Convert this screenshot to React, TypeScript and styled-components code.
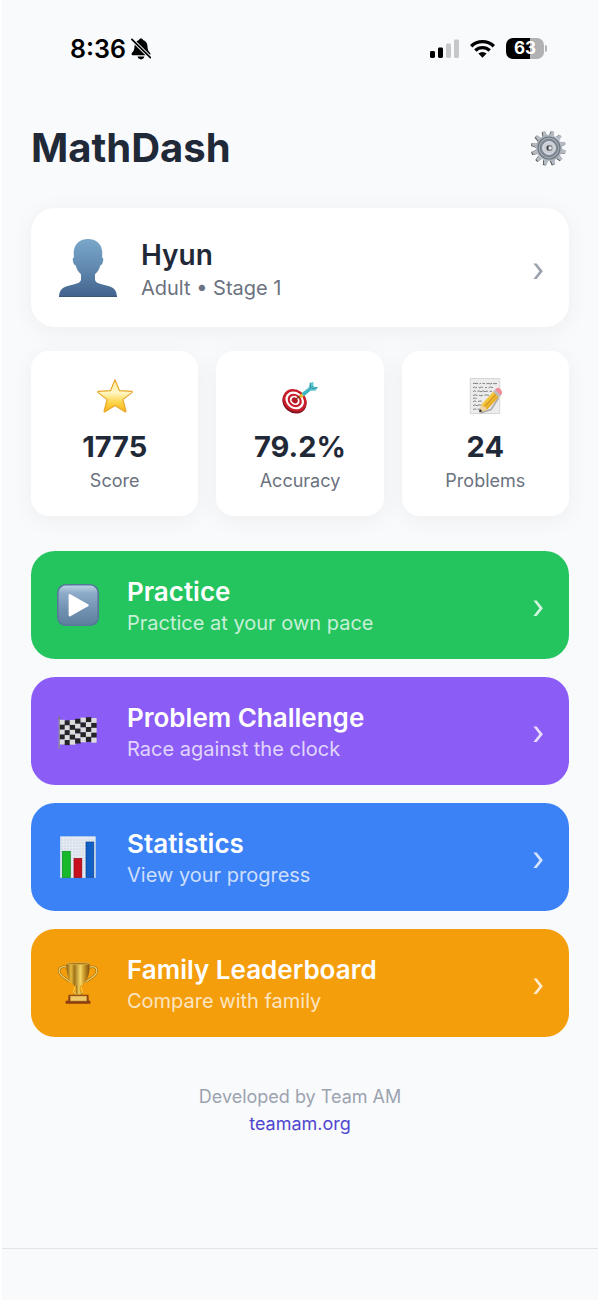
import { createGlobalStyle, styled } from "styled-components";

const GEAR_TEETH = Array.from({ length: 12 }, (_, i) => i * 30 + 13);

const App = () => {
  return (
    <Page>
      <GlobalStyle />
      <StatusBar>
        <StatusGroup $gap={5}>
          <Time>8:36</Time>
          <BellOffIcon />
        </StatusGroup>
        <StatusGroup $gap={11}>
          <SignalIcon />
          <WifiIcon />
          <Battery>63</Battery>
        </StatusGroup>
      </StatusBar>

      <Content>
        <Header>
          <Title>MathDash</Title>
          <IconButton aria-label="Settings">
            <GearIcon />
          </IconButton>
        </Header>

        <ProfileCard>
          <PersonIcon />
          <CardText>
            <ProfileName>Hyun</ProfileName>
            <ProfileInfo>Adult • Stage 1</ProfileInfo>
          </CardText>
          <Chevron color="#9ca3af" />
        </ProfileCard>

        <Stats>
          {stats.map(({ icon, value, label }) => (
            <StatCard key={label}>
              {icon}
              <StatValue>{value}</StatValue>
              <StatLabel>{label}</StatLabel>
            </StatCard>
          ))}
        </Stats>

        <Menu>
          {menus.map(({ icon, title, description, color }) => (
            <MenuButton key={title} $color={color}>
              {icon}
              <CardText>
                <MenuTitle>{title}</MenuTitle>
                <MenuDescription>{description}</MenuDescription>
              </CardText>
              <Chevron color="rgba(255, 255, 255, 0.8)" />
            </MenuButton>
          ))}
        </Menu>

        <Footer>
          <span>Developed by Team AM</span>
          <FooterLink href="#">teamam.org</FooterLink>
        </Footer>
      </Content>

      <BottomBar />
    </Page>
  );
};

const Chevron = ({ color }: { color: string }) => (
  <svg width="10" height="21" viewBox="0 0 10 21" fill={color}>
    <path d="M0.4 5.6H3.7L9.9 13.3L3.7 21H0.4L6.4 13.3Z" />
  </svg>
);

const BellOffIcon = () => (
  <svg width="20" height="22" viewBox="0 0 20 22">
    <path
      d="M10 0.4C8.8 0.4 8.1 1.1 8 2.1C5 3 3.6 5.6 3.5 8.6C3.4 12.2 2.4 13.4 1 14.8C0.2 15.7 0.5 17.2 1.8 17.2H18.2C19.5 17.2 19.8 15.7 19 14.8C17.6 13.4 16.6 12.2 16.5 8.6C16.4 5.6 15 3 12 2.1C11.9 1.1 11.2 0.4 10 0.4Z"
      fill="#000"
    />
    <path d="M6.6 18.6H13.4C13 20.4 11.8 21.4 10 21.4S7 20.4 6.6 18.6Z" fill="#000" />
    <path d="M0 0.6L20 20.2" stroke="#f9fafc" strokeWidth="3.6" />
    <path d="M0.9 1.3L19.4 19.6" stroke="#000" strokeWidth="1.7" strokeLinecap="round" />
  </svg>
);

const SignalIcon = () => (
  <svg width="29" height="20" viewBox="0 0 29 20">
    <rect x="0" y="12" width="5" height="7" rx="1.4" fill="#000" />
    <rect x="8" y="8.6" width="5" height="10.4" rx="1.4" fill="#000" />
    <rect x="16" y="4.4" width="5" height="14.6" rx="1.4" fill="#c6c7c8" />
    <rect x="24" y="0.4" width="5" height="18.6" rx="1.4" fill="#c6c7c8" />
  </svg>
);

const WifiIcon = () => (
  <svg width="25" height="20" viewBox="0 0 25 20">
    <g fill="none" stroke="#000" strokeWidth="3.4">
      <path d="M1.2 7.2A16.2 16.2 0 0 1 23.8 7.2" />
      <path d="M5.3 11.5A10.4 10.4 0 0 1 19.7 11.5" />
    </g>
    <path d="M8.4 14.6A6 6 0 0 1 16.6 14.6L12.5 18.7Z" fill="#000" />
  </svg>
);

const GearIcon = () => (
  <svg width="36" height="36" viewBox="0 0 36 36">
    <defs>
      <linearGradient id="gearFace" x1="0" y1="0" x2="1" y2="1">
        <stop offset="0" stopColor="#9aa1a8" />
        <stop offset="0.5" stopColor="#c3c8ce" />
        <stop offset="1" stopColor="#9ea5ae" />
      </linearGradient>
    </defs>
    <g fill="#55534f" transform="translate(-0.8 0.4)">
      {GEAR_TEETH.map((angle) => (
        <path key={angle} d="M15.8 6L16.5 0.7H19.5L20.2 6Z" transform={`rotate(${angle} 18 18)`} />
      ))}
    </g>
    <g fill="#b4bac1">
      {GEAR_TEETH.map((angle) => (
        <path key={angle} d="M15.8 6L16.6 0.8H19.4L20.2 6Z" transform={`rotate(${angle} 18 18)`} />
      ))}
    </g>
    <circle cx="18" cy="18" r="13.2" fill="url(#gearFace)" />
    <circle cx="18" cy="18" r="11" fill="#a3abb3" stroke="#6d767f" strokeWidth="1.2" />
    <circle cx="18" cy="18" r="8.6" fill="#858e98" stroke="#747d86" strokeWidth="1" />
    <circle cx="18" cy="18" r="6.4" fill="#c9ced4" stroke="#eceff2" strokeWidth="0.8" />
    <circle cx="18.4" cy="18" r="3.1" fill="#7a8087" />
    <path d="M17 15.4A3 3 0 0 0 17.4 20.6Z" fill="#3b3a38" />
    <circle cx="19.2" cy="18" r="1.5" fill="#f1f3f5" />
  </svg>
);

const PersonIcon = () => (
  <svg width="58" height="58" viewBox="0 0 58 58">
    <defs>
      <linearGradient id="person" x1="0" y1="0" x2="0" y2="1">
        <stop offset="0" stopColor="#7aa7cb" />
        <stop offset="0.5" stopColor="#6289b0" />
        <stop offset="1" stopColor="#41628c" />
      </linearGradient>
    </defs>
    <path
      d="M29 0C20 0 14.6 6 14.7 14.5L14.9 18.6C13.4 18.8 13.6 21 14.2 23.2C14.7 25.2 15.6 26.2 16.6 26.2C17.6 30.2 19.5 33 22 35.2V41C21 44 17 45 11.5 46.2C3.5 47.8 0.3 50.5 0 58H58C57.7 50.5 54.5 47.8 46.5 46.2C41 45 37 44 36 41V35.2C38.5 33 40.4 30.2 41.4 26.2C42.4 26.2 43.3 25.2 43.8 23.2C44.4 21 44.6 18.8 43.1 18.6L43.3 14.5C43.4 6 38 0 29 0Z"
      fill="url(#person)"
    />
    <path d="M0 57.5H58" stroke="#3b5678" />
  </svg>
);

const StarIcon = () => (
  <svg width="36" height="36" viewBox="0 0 36 36">
    <defs>
      <linearGradient id="star" x1="0" y1="0" x2="0" y2="1">
        <stop offset="0" stopColor="#fff0a0" />
        <stop offset="0.4" stopColor="#fff6c4" />
        <stop offset="0.7" stopColor="#fdd64a" />
        <stop offset="1" stopColor="#f8b51c" />
      </linearGradient>
    </defs>
    <path
      d="M18 1.8L22.4 12.6L34.6 13.4C35.4 13.5 35.5 14 34.9 14.6L25.9 21.6L28.9 33C29 33.8 28.5 34.1 27.9 33.7L18 27.5L8.1 33.7C7.5 34.1 7 33.8 7.1 33L10.1 21.6L1.1 14.6C0.5 14 0.6 13.5 1.4 13.4L13.6 12.6Z"
      fill="url(#star)"
      stroke="#eaa62b"
      strokeWidth="1.2"
      strokeLinejoin="round"
    />
  </svg>
);

const TargetIcon = () => (
  <svg width="36" height="36" viewBox="0 0 36 36">
    <g transform="rotate(38 12.6 22.6)">
      <ellipse cx="13.2" cy="23.6" rx="12.8" ry="11" fill="#7d1220" />
      <ellipse cx="12.6" cy="22.4" rx="12.5" ry="10.6" fill="#c81f2b" />
      <ellipse cx="12.6" cy="22.4" rx="9.8" ry="8.2" fill="#fff" />
      <ellipse cx="12.6" cy="22.4" rx="7.5" ry="6.3" fill="#c81f2b" />
      <ellipse cx="12.6" cy="22.4" rx="5.2" ry="4.3" fill="#fff" />
      <ellipse cx="12.6" cy="22.4" rx="3.2" ry="2.7" fill="#b51823" />
    </g>
    <path d="M14 21L20 16.5" stroke="#6d3a1c" strokeWidth="1.2" />
    <path d="M18 19L23 15" stroke="#e9b93c" strokeWidth="3.4" />
    <path d="M19.6 15.2L27 9.4L28.8 12.4L22 18.2Z" fill="#3fb7c5" />
    <path d="M26 11L28.2 4.8L31.6 4L31.2 8.2L35.6 9.4L33.8 12.4L27.6 13Z" fill="#5cc8d3" />
    <path d="M26.4 12L31.4 8.2M28.2 4.8L28.6 9.6M35.6 9.4L30 11" stroke="#227f91" strokeWidth="0.8" />
  </svg>
);

const MemoIcon = () => (
  <svg width="36" height="36" viewBox="0 0 36 36">
    <defs>
      <linearGradient id="pencil" x1="0" y1="0" x2="1" y2="1">
        <stop offset="0.2" stopColor="#ffdf54" />
        <stop offset="0.8" stopColor="#dd9312" />
      </linearGradient>
    </defs>
    <rect x="3.2" y="0.4" width="29.6" height="35" fill="#ececec" stroke="#cfcfcf" strokeWidth="0.8" />
    <g stroke="#77787a" strokeWidth="0.9" fill="none">
      <path d="M6 5.8L7 5L8 5.8L9 5.2L11 5.6M12.4 5.8L14 5.2M15.4 5.4L18 5.6M19.4 5.8L21 5.2L23 6L25 5.3M26 5.6H30" />
      <path d="M6 9.8L7.4 9L8.6 9.8L10 9.2M11.6 9.4L13 10L14.4 9L16 9.6M18 9.6H20M21.6 9.8L23.4 9L26 9.6" />
      <path d="M6 13.6L7.4 12.8L9 13.4M10.4 13.4L12 12.8L14 13.8L16 12.8L18 13.6L21 13M22.6 13.4H25" />
      <path d="M6 17.6L8 16.8L10.6 17.4M12 17.2L14 17.8L16 17M17.4 17.4L19 16.8L22 17.4" />
      <path d="M6 20.4L8 20L9.6 20.6M6 23.8L7.6 23L9.4 23.6M11 23.6L13 22.8L14.8 23.4" />
      <path d="M6 27.6L8 26.8L10 27.8L12 26.8L15 27.4M6 31.6L8 30.8L9.4 31.4M10.6 31.2H13" />
    </g>
    <path d="M13.4 35L24 31.5L31.5 20" stroke="#aaa" strokeWidth="1.6" fill="none" />
    <path d="M14.4 26.6L27.4 12.6L32.6 18.2L19.8 32L12.4 34.2Z" fill="url(#pencil)" />
    <path d="M14.4 26.6L12.2 33.9L19.8 32L18.6 29L16 28.8Z" fill="#efd2a2" />
    <path d="M12.9 31L12 34.2L15.4 33.2Z" fill="#302d2a" />
    <path d="M18 28.2L29.8 15.2" stroke="#bc790e" strokeWidth="0.8" />
    <path d="M26.2 13.8L28 11.8L33.6 17.4L31.8 19.4Z" fill="#b9bcc0" />
    <path d="M28 11.8L29.4 10.4C30.6 9.4 32 9.8 33.4 11.2C35 12.8 35.6 14.6 34.8 16L33.6 17.4Z" fill="#ef8c95" />
  </svg>
);

const PlayIcon = () => (
  <svg width="42" height="42" viewBox="0 0 42 42">
    <defs>
      <linearGradient id="play" x1="0" y1="0" x2="0" y2="1">
        <stop offset="0" stopColor="#c3d6e6" />
        <stop offset="0.2" stopColor="#8eacc9" />
        <stop offset="0.6" stopColor="#7292b3" />
        <stop offset="1" stopColor="#5f7f9e" />
      </linearGradient>
    </defs>
    <rect x="0.8" y="0.8" width="40.4" height="40.4" rx="8" fill="url(#play)" stroke="#55789a" strokeWidth="1.6" />
    <path d="M11.6 11.4C11.6 10.2 12.5 9.8 13.4 10.3L31 20.2C32 20.8 32 21.6 31 22.2L13.4 32.2C12.5 32.7 11.6 32.2 11.6 31.1Z" fill="#fff" />
  </svg>
);

// x, width and vertical shift of each column of the waving flag
const FLAG_COLUMNS = [
  [0, 4.4, 0.4],
  [4.8, 4.6, 1],
  [9.8, 5, 0.6],
  [15.2, 5, -0.6],
  [20.6, 5, -1.8],
  [26, 5, -2.2],
  [31.4, 4.6, -1.4],
];

const FlagIcon = () => (
  <svg width="42" height="42" viewBox="0 0 42 42">
    <path d="M2.2 8V39" stroke="#8d8d92" strokeWidth="1.4" />
    <circle cx="2.2" cy="8" r="1.3" fill="#77757d" />
    {FLAG_COLUMNS.map(([x, width, y], col) =>
      [0, 1, 2, 3, 4].map((row) => (
        <rect
          key={`${col}-${row}`}
          x={x + 2.9}
          y={y + 9.4 + row * 4.9}
          width={width + 0.7}
          height="5.1"
          fill={(row + col) % 2 === 0 ? "#dcdcdc" : "#242427"}
        />
      )),
    )}
  </svg>
);

const ChartIcon = () => (
  <svg width="42" height="42" viewBox="0 0 42 42">
    <rect x="3.2" y="0.4" width="35.4" height="41.4" fill="#e9eef5" />
    <g stroke="#c5d0dd" strokeWidth="0.5">
      {[4, 7, 10, 13, 16, 19, 22, 25, 28, 31, 34, 37].map((pos) => (
        <path key={pos} d={`M3.2 ${pos}H38.6M${pos + 1} 0.4V41.8`} />
      ))}
    </g>
    <rect x="5.3" y="15.3" width="8" height="26.3" fill="#17b82c" stroke="#0b8d20" strokeWidth="0.7" />
    <rect x="17" y="22.5" width="7.8" height="19.1" fill="#c8101d" stroke="#8e0a18" strokeWidth="0.7" />
    <rect x="29" y="6" width="7.8" height="35.6" fill="#125fc6" stroke="#0a4295" strokeWidth="0.7" />
  </svg>
);

const TrophyIcon = () => (
  <svg width="42" height="42" viewBox="0 0 42 42">
    <defs>
      <linearGradient id="cup" x1="0" y1="0" x2="1" y2="0">
        <stop offset="0" stopColor="#8a5a10" />
        <stop offset="0.2" stopColor="#e5b93d" />
        <stop offset="0.35" stopColor="#a1741a" />
        <stop offset="0.6" stopColor="#f6d765" />
        <stop offset="0.8" stopColor="#c08c20" />
        <stop offset="1" stopColor="#7c4f0b" />
      </linearGradient>
    </defs>
    <g fill="none" stroke="#9a6912" strokeWidth="2.4">
      <path d="M10 5.4C5.4 3.6 1.6 5.4 2.2 9.6C2.9 14.6 8.4 15.6 13 20" />
      <path d="M32 5.4C36.6 3.6 40.4 5.4 39.8 9.6C39.1 14.6 33.6 15.6 29 20" />
    </g>
    <g fill="none" stroke="#f3d166" strokeWidth="1.2">
      <path d="M10 5.4C5.4 3.6 1.6 5.4 2.2 9.6C2.9 14.6 8.4 15.6 13 20" />
      <path d="M32 5.4C36.6 3.6 40.4 5.4 39.8 9.6C39.1 14.6 33.6 15.6 29 20" />
    </g>
    <path d="M9.4 1.4H32.6C32.8 11 31 19.4 24 24H18C11 19.4 9.2 11 9.4 1.4Z" fill="url(#cup)" />
    <ellipse cx="21" cy="1.6" rx="11.6" ry="1.1" fill="#a8781e" stroke="#e8bf4d" strokeWidth="0.6" />
    <path d="M18.4 23.6H23.6L22.6 27.6L25.6 32.4H16.4L19.4 27.6Z" fill="url(#cup)" />
    <path d="M18 25L16.4 30L19.6 32M24 25L25.6 30L22.4 32" stroke="#f1cc5b" strokeWidth="1" fill="none" />
    <path d="M11.6 32.8H31.4L31.8 38.8H33.4V41.8H8.6V38.8H11.2Z" fill="#8b3d13" />
    <rect x="13.2" y="34" width="16.6" height="5" fill="#efc968" stroke="#bf8628" strokeWidth="0.6" />
  </svg>
);

const stats = [
  { icon: <StarIcon />, value: "1775", label: "Score" },
  { icon: <TargetIcon />, value: "79.2%", label: "Accuracy" },
  { icon: <MemoIcon />, value: "24", label: "Problems" },
];

const menus = [
  { icon: <PlayIcon />, title: "Practice", description: "Practice at your own pace", color: "#24c55f" },
  { icon: <FlagIcon />, title: "Problem Challenge", description: "Race against the clock", color: "#8b5cf6" },
  { icon: <ChartIcon />, title: "Statistics", description: "View your progress", color: "#3b82f6" },
  { icon: <TrophyIcon />, title: "Family Leaderboard", description: "Compare with family", color: "#f59e0b" },
];

const GlobalStyle = createGlobalStyle`
  * {
    box-sizing: border-box;
  }

  body {
    margin: 0;
    background: #fff;
    color: #1f2937;
    font-family: Inter, sans-serif;
  }

  button {
    border: 0;
    color: inherit;
    font-family: inherit;
    text-align: left;
    cursor: pointer;
  }

  svg {
    display: block;
    flex-shrink: 0;
  }
`;

const Page = styled.div`
  display: flex;
  flex-direction: column;
  min-height: 100vh;
  margin: 0 2px;
  background: #f9fafc;
`;

const StatusBar = styled.div`
  display: flex;
  align-items: center;
  justify-content: space-between;
  height: 97px;
  padding: 0 54px 0 68px;
  color: #000;
`;

const StatusGroup = styled.div<{ $gap: number }>`
  display: flex;
  align-items: center;
  gap: ${({ $gap }) => $gap}px;
`;

const Time = styled.span`
  font-size: 25px;
  font-weight: 600;
`;

const Battery = styled.span`
  position: relative;
  width: 38px;
  border-radius: 7px;
  background: linear-gradient(to right, #000 63%, #b1b1b3 63%);
  color: #fff;
  font-size: 17px;
  font-weight: 700;
  line-height: 21px;
  text-align: center;

  &::after {
    content: "";
    position: absolute;
    top: 7px;
    right: -3px;
    width: 2px;
    height: 7px;
    border-radius: 0 2px 2px 0;
    background: #b1b1b3;
  }
`;

const Content = styled.main`
  flex: 1;
  padding: 0 29px;
`;

const Header = styled.header`
  display: flex;
  align-items: center;
  justify-content: space-between;
  padding: 27px 2px 36px 0;
`;

const Title = styled.h1`
  margin: 0;
  font-size: 40px;
  font-weight: 700;
  line-height: 48px;
`;

const IconButton = styled.button`
  padding: 0;
  background: none;
`;

const ProfileCard = styled.button`
  display: flex;
  align-items: center;
  gap: 24px;
  width: 100%;
  padding: 27px 26px 26px 28px;
  border-radius: 24px;
  background: #fff;
  box-shadow: 0 4px 24px rgba(0, 0, 0, 0.05);
`;

const CardText = styled.span`
  display: flex;
  flex: 1;
  flex-direction: column;
`;

const ProfileName = styled.span`
  font-size: 28px;
  font-weight: 600;
  line-height: 40px;
`;

const ProfileInfo = styled.span`
  color: #6b7280;
  font-size: 20px;
  line-height: 26px;
`;

const Stats = styled.div`
  display: grid;
  grid-template-columns: repeat(3, 1fr);
  gap: 18px;
  margin: 24px 0 35px;
`;

const StatCard = styled.div`
  display: flex;
  flex-direction: column;
  align-items: center;
  padding: 27px 8px 20px;
  border-radius: 18px;
  background: #fff;
  box-shadow: 0 4px 24px rgba(0, 0, 0, 0.05);
`;

const StatValue = styled.strong`
  margin-top: 14px;
  font-size: 29px;
  font-weight: 700;
  line-height: 38px;
`;

const StatLabel = styled.span`
  color: #6b7280;
  font-size: 18px;
  line-height: 30px;
`;

const Menu = styled.nav`
  display: flex;
  flex-direction: column;
  gap: 18px;
`;

const MenuButton = styled.button<{ $color: string }>`
  display: flex;
  align-items: center;
  gap: 28px;
  padding: 23px 26px;
  border-radius: 24px;
  background: ${({ $color }) => $color};
  color: #fff;
`;

const MenuTitle = styled.span`
  font-size: 26px;
  font-weight: 600;
  line-height: 36px;
`;

const MenuDescription = styled.span`
  color: rgba(255, 255, 255, 0.75);
  font-size: 20px;
  line-height: 26px;
`;

const Footer = styled.footer`
  display: flex;
  flex-direction: column;
  align-items: center;
  padding: 46px 0;
  color: #9ca3af;
  font-size: 18px;
  line-height: 27px;
`;

const FooterLink = styled.a`
  color: #4f46cf;
  text-decoration: none;
`;

const BottomBar = styled.div`
  height: 52px;
  border-top: 1px solid #e2e4e8;
`;

export default App;
